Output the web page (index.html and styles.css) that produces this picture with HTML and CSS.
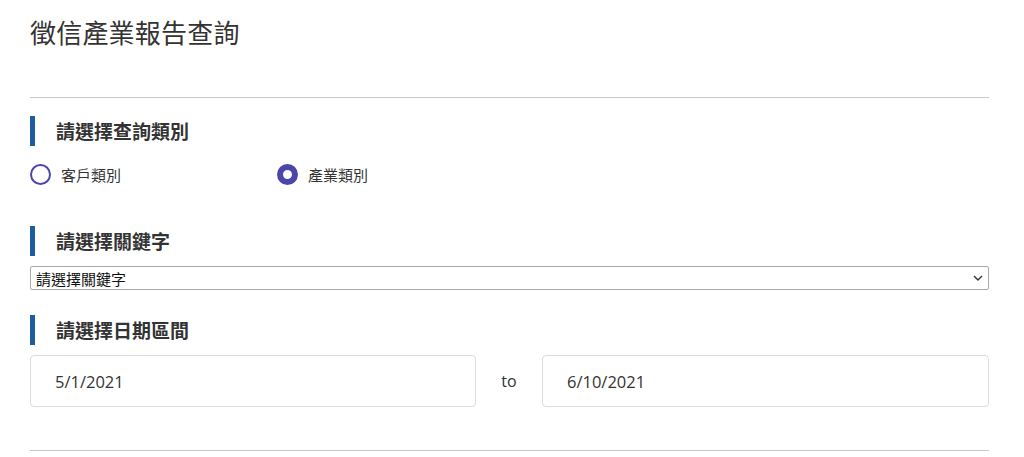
FILE: index.html
```html
<!DOCTYPE html>
<html lang="zh-Hant">
<head>
<meta charset="utf-8">
<title>徵信產業報告查詢</title>
<link rel="stylesheet" href="styles.css">
</head>
<body>
<main class="page">
  <h1 class="title">徵信產業報告查詢</h1>
  <hr class="rule rule-top">

  <h2 class="section-head">請選擇查詢類別</h2>
  <div class="radio-row">
    <label class="radio-item">
      <span class="radio"></span>
      <span class="radio-label">客戶類別</span>
    </label>
    <label class="radio-item">
      <span class="radio radio-checked"></span>
      <span class="radio-label">產業類別</span>
    </label>
  </div>

  <h2 class="section-head head-keyword">請選擇關鍵字</h2>
  <div class="select">
    <span class="select-text">請選擇關鍵字</span>
    <svg class="chevron" width="10" height="6" viewBox="0 0 10 6"><path d="M1 1 L5 5 L9 1" fill="none" stroke="#333" stroke-width="1.4"/></svg>
  </div>

  <h2 class="section-head head-date">請選擇日期區間</h2>
  <div class="date-row">
    <div class="date-input">5/1/2021</div>
    <div class="date-to">to</div>
    <div class="date-input">6/10/2021</div>
  </div>
  <hr class="rule rule-bottom">
</main>
</body>
</html>
```

FILE: styles.css
```css
* { box-sizing: border-box; }
html, body { margin: 0; padding: 0; background: #fff; }
body {
  font-family: "Noto Sans CJK TC", "Noto Sans", sans-serif;
  color: #333;
}
.page {
  width: 959px;
  margin-left: 30px;
  padding-top: 14px;
}
.title {
  margin: 0;
  font-size: 26px;
  line-height: 36px;
  font-weight: 400;
  color: #333;
  letter-spacing: 0.2px;
}
.rule {
  border: 0;
  height: 1px;
  background: #c8c8c8;
  margin: 0;
}
.rule-top { margin-top: 47px; }
.section-head {
  margin: 18px 0 0;
  height: 30px;
  line-height: 30px;
  border-left: 5px solid #1d5c9e;
  padding-left: 21px;
  font-size: 19px;
  font-weight: 700;
  color: #333;
}
.radio-row {
  display: flex;
  margin-top: 17px;
  height: 22px;
  align-items: center;
}
.radio-item {
  display: flex;
  align-items: center;
  gap: 10px;
  width: 247px;
}
.radio {
  width: 21px;
  height: 21px;
  border-radius: 50%;
  border: 2px solid #4d46aa;
  background: #fff;
}
.radio-checked {
  border: 6px solid #4d46aa;
}
.radio-label {
  font-size: 15px;
  color: #333;
}
.head-keyword { margin-top: 41px; }
.select {
  margin-top: 10px;
  height: 24px;
  border: 1px solid #aaa;
  border-radius: 2px;
  display: flex;
  align-items: center;
  justify-content: space-between;
  padding: 0 5px 0 5px;
  font-size: 15px;
  color: #111;
}
.head-date { margin-top: 25px; }
.date-row {
  margin-top: 10px;
  display: grid;
  grid-template-columns: 446px 66px 447px;
  height: 52px;
}
.date-input {
  border: 1px solid #dcdcdc;
  border-radius: 4px;
  padding-left: 24px;
  display: flex;
  align-items: center;
  font-family: "Open Sans", "Noto Sans", sans-serif;
  font-size: 16.5px;
  color: #333;
}
.date-to {
  display: flex;
  align-items: center;
  justify-content: center;
  font-family: "Open Sans", "Noto Sans", sans-serif;
  font-size: 16px;
  color: #333;
}
.rule-bottom { margin-top: 43px; }
```
